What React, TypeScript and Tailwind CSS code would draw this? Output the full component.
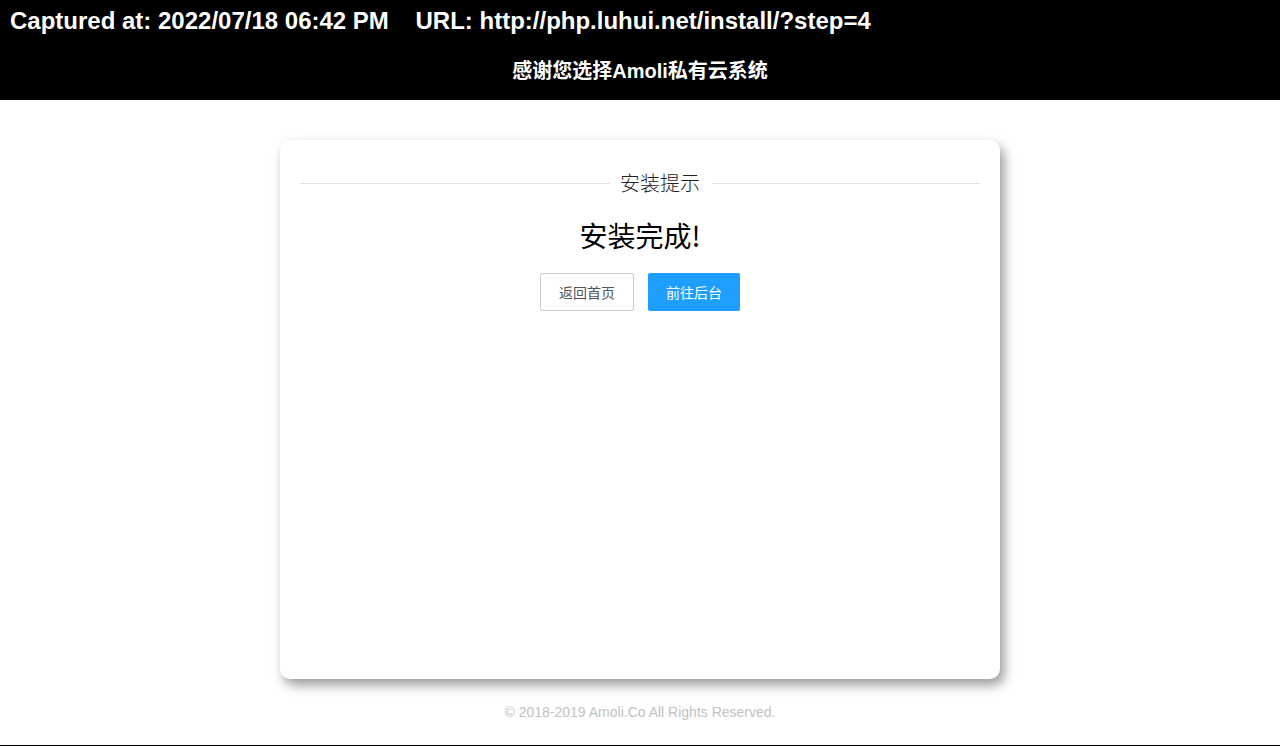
import React from "react";

export default function App() {
  return (
    <div className="flex h-[746px] w-full flex-col bg-white" style={{ fontFamily: '"Liberation Sans", Arial, "Noto Sans CJK SC", sans-serif' }}>
      <header className="h-[100px] shrink-0 bg-black text-white">
        <div className="whitespace-pre pl-[10px] pt-[6px] text-[24px] font-bold leading-[30px]">
          {"Captured at: 2022/07/18 06:42 PM    URL: http://php.luhui.net/install/?step=4"}
        </div>
        <div className="mt-[21px] text-center text-[20px] font-bold leading-[28px]">感谢您选择Amoli私有云系统</div>
      </header>

      <main className="flex shrink-0 justify-center pt-[40px]">
        <div className="h-[539px] w-[720px] rounded-[10px] bg-white px-[20px] pt-[30px] shadow-[4px_6px_12px_rgba(0,0,0,0.4)]">
          <div className="flex h-[26px] items-center">
            <div className="h-px w-[310px] bg-[#e2e2e2]" />
            <div
              className="pl-[10px] pr-[12px] text-[20px] leading-[26px] text-[#222]"
              style={{ fontFamily: '"Noto Sans CJK SC", sans-serif', fontWeight: 300 }}
            >
              安装提示
            </div>
            <div className="h-px flex-1 bg-[#e2e2e2]" />
          </div>
          <div
            className="mt-[19px] text-center text-[28px] leading-[40px] text-black"
            style={{ fontFamily: '"Noto Sans CJK SC", sans-serif', fontWeight: 400 }}
          >
            安装完成!
          </div>
          <div className="mt-[18px] flex justify-center gap-[14px]" style={{ fontFamily: '"Noto Sans CJK SC", sans-serif' }}>
            <button className="h-[38px] w-[94px] rounded-[2px] border border-[#c9c9c9] bg-white text-[14px] leading-[36px] text-[#555]">返回首页</button>
            <button className="h-[38px] w-[92px] rounded-[2px] bg-[#1e9fff] text-[14px] leading-[38px] text-white">前往后台</button>
          </div>
        </div>
      </main>

      <footer className="mt-[23px] text-center text-[14px] leading-[20px] text-[#c2c2c2]">
        © 2018-2019 Amoli.Co All Rights Reserved.
      </footer>
      <div className="flex-1" />
      <div className="h-px shrink-0 bg-black" />
    </div>
  );
}
